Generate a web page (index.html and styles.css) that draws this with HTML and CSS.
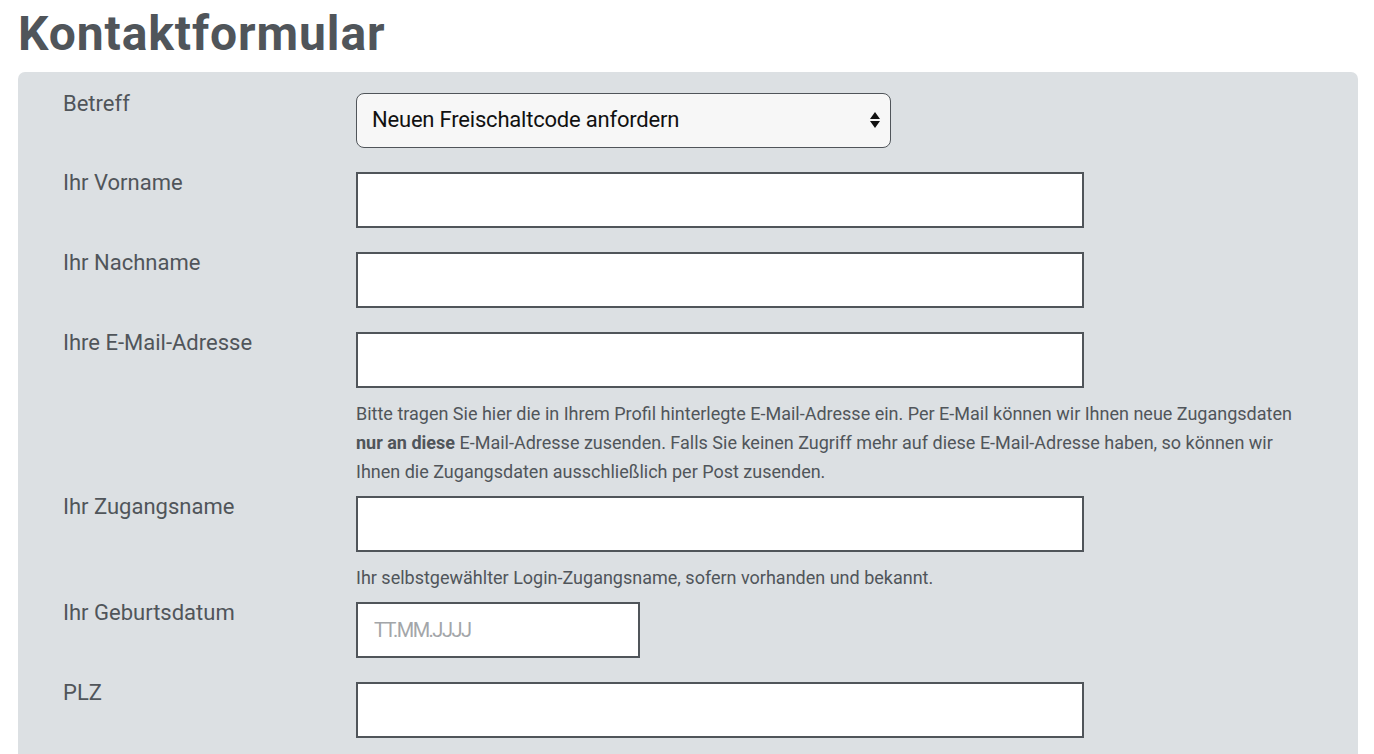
FILE: index.html
```html
<!DOCTYPE html>
<html lang="de">
<head>
<meta charset="utf-8">
<title>Kontaktformular</title>
<link rel="stylesheet" href="styles.css">
</head>
<body>
<h1 class="title">Kontaktformular</h1>
<form class="panel">
  <div class="row">
    <label class="label">Betreff</label>
    <div class="field">
      <div class="select">
        <span class="select-text">Neuen Freischaltcode anfordern</span>
        <svg class="select-arrows" width="10" height="18" viewBox="0 0 10 18"><path d="M5 1 L10 8 L0 8 Z M0 10 L10 10 L5 17 Z" fill="#111"/></svg>
      </div>
    </div>
  </div>
  <div class="row">
    <label class="label">Ihr Vorname</label>
    <div class="field"><input class="input" type="text"></div>
  </div>
  <div class="row">
    <label class="label">Ihr Nachname</label>
    <div class="field"><input class="input" type="text"></div>
  </div>
  <div class="row has-help">
    <label class="label">Ihre E-Mail-Adresse</label>
    <div class="field">
      <input class="input" type="text">
      <p class="help">Bitte tragen Sie hier die in Ihrem Profil hinterlegte E-Mail-Adresse ein. Per E-Mail können wir Ihnen neue Zugangsdaten <b>nur an diese</b> E-Mail-Adresse zusenden. Falls Sie keinen Zugriff mehr auf diese E-Mail-Adresse haben, so können wir Ihnen die Zugangsdaten ausschließlich per Post zusenden.</p>
    </div>
  </div>
  <div class="row has-help">
    <label class="label">Ihr Zugangsname</label>
    <div class="field">
      <input class="input" type="text">
      <p class="help">Ihr selbstgewählter Login-Zugangsname, sofern vorhanden und bekannt.</p>
    </div>
  </div>
  <div class="row">
    <label class="label">Ihr Geburtsdatum</label>
    <div class="field"><input class="input input-short" type="text" placeholder="TT.MM.JJJJ"></div>
  </div>
  <div class="row">
    <label class="label">PLZ</label>
    <div class="field"><input class="input" type="text"></div>
  </div>
</form>
</body>
</html>
```
FILE: styles.css
```css
html, body {
  margin: 0;
  padding: 0;
  background: #ffffff;
}
body {
  font-family: Roboto, "Noto Sans", sans-serif;
  color: #50555a;
  overflow: hidden;
}
.title {
  margin: 0;
  padding: 6px 0 0 18px;
  height: 72px;
  box-sizing: border-box;
  font-size: 48px;
  line-height: 56px;
  font-weight: 700;
  letter-spacing: 0.9px;
  color: #50555a;
}
.panel {
  margin: 0 16px 0 18px;
  background: #dce0e3;
  border-radius: 7px;
  padding: 21px 45px 20px 45px;
}
.row {
  display: grid;
  grid-template-columns: 293px 1fr;
  margin-bottom: 24px;
}
.row.has-help {
  margin-bottom: 10px;
}
.label {
  font-size: 22px;
  line-height: 22px;
  letter-spacing: 0;
  color: #50555a;
}
.field {
  display: flex;
  flex-direction: column;
}
.select {
  width: 535px;
  height: 55px;
  box-sizing: border-box;
  border: 1.5px solid #50555a;
  border-radius: 8px;
  background: #f7f7f7;
  display: flex;
  align-items: center;
  justify-content: space-between;
  padding: 0 10px 2px 15px;
}
.select-text {
  font-size: 22px;
  letter-spacing: -0.2px;
  color: #111;
}
.input {
  width: 728px;
  height: 56px;
  box-sizing: border-box;
  border: 2px solid #50555a;
  border-radius: 0;
  background: #ffffff;
  margin: 0;
  padding: 0 16px;
  font-family: Roboto, "Noto Sans", sans-serif;
  font-size: 20px;
  letter-spacing: -1.5px;
  outline: none;
}
.input-short {
  width: 284px;
}
.input::placeholder {
  color: #a3a6a9;
}
.help {
  margin: 11px 0 0 0;
  font-size: 18px;
  line-height: 29px;
  letter-spacing: 0;
  color: #50555a;
  max-width: 950px;
}
.help b {
  font-weight: 700;
}
```
